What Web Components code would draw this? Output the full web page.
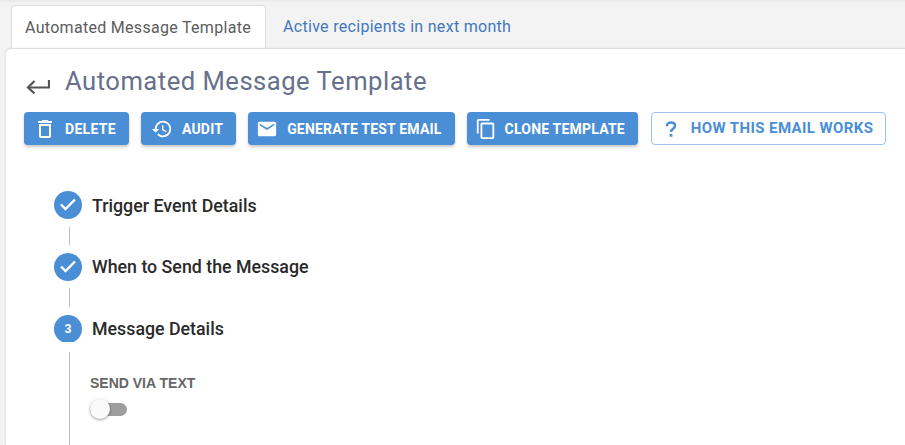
<!DOCTYPE html>
<html>
<head>
<meta charset="utf-8">
<style>
  html, body { margin: 0; padding: 0; height: 100%; overflow: hidden; background: #f3f3f3; }
  body { font-family: Roboto, sans-serif; }
</style>
</head>
<body>
<template id="tabs-tpl">
  <style>
    :host { display: flex; height: 48px; padding: 5px 0 0 11px; box-sizing: border-box; background: linear-gradient(#e9e9e9, #f3f3f3 3px); position: relative; z-index: 0; }
    a { display: block; font-size: 16px; letter-spacing: .3px; line-height: 44px; padding: 0 14px; color: #3f78c0; }
    a.active { background: #fff; color: #5c5c5c; border: 1px solid #dedede; border-bottom: 0; border-radius: 4px 4px 0 0; height: 44px; line-height: 43px; padding: 0 14px 0 13px; margin-right: 3px; box-sizing: border-box; }
  </style>
  <a class="active">Automated Message Template</a>
  <a>Active recipients in next month</a>
</template>

<template id="card-tpl">
  <style>
    :host { display: block; margin-left: 5px; height: 397px; background: #fff; border-top: 1px solid #dedede; border-left: 1px solid #e8e8e8; border-radius: 6px 0 0 0; box-sizing: border-box; position: relative; box-shadow: 0 0 2px rgba(0,0,0,.08); padding: 0 0 0 18px; overflow: hidden; }
    header { display: flex; align-items: center; height: 63px; }
    header svg { width: 24px; height: 24px; margin: 8px 15px 0 2px; flex: none; }
    h1 { margin: 0; padding-top: 2px; font-size: 25.6px; font-weight: 400; letter-spacing: .5px; line-height: 67px; color: #67708c; }
    .actions { display: flex; }
    .steps { padding: 46px 0 0 30px; }
  </style>
  <header>
    <svg viewBox="0 0 24 24" fill="none" stroke="#555" stroke-width="2.200"><path d="M23 7v7.500H2.500"/><path d="M8.500 8 2 14.500l6.500 6"/></svg>
    <h1><slot name="title"></slot></h1>
  </header>
  <div class="actions"><slot name="actions"></slot></div>
  <div class="steps"><slot></slot></div>
</template>

<template id="btn-tpl">
  <style>
    :host { display: block; margin-right: 12px; }
    :host([outline]) { margin-left: 1px; }
    button { display: flex; align-items: center; height: 33px; padding: 0 13px 0 var(--pad, 10px); border: 0; border-radius: 4px; background: #4a8ed6; color: #fff; font: 700 14px Roboto, sans-serif; letter-spacing: var(--ls, .2px); box-shadow: 0 2px 3px rgba(0,0,0,.22); white-space: nowrap; }
    span { display: flex; width: 22px; margin-right: var(--gap, 9px); justify-content: center; }
    :host([outline]) button { background: #fff; color: #4a8ed6; border: 1px solid #9cc2ea; box-shadow: none; font-size: 15px; letter-spacing: .4px; padding: 0 12px 2px 8px; }
    :host([outline]) ::slotted(svg) { margin-top: 2px; }
    ::slotted(svg) { display: block; width: 22px; height: 22px; flex: none; }
  </style>
  <button><span><slot name="icon"></slot></span><slot></slot></button>
</template>

<template id="step-tpl">
  <style>
    :host { display: block; }
    .row { display: flex; align-items: center; height: 28px; }
    .dot { width: 28px; height: 28px; border-radius: 50%; background: #4a8ed6; color: #fff; display: flex; align-items: center; justify-content: center; font: 700 12.500px "Liberation Sans", sans-serif; margin-right: 10px; flex: none; }
    :host(:not([done])) .dot { clip-path: inset(0 0 1px 0); }
    ::slotted(svg) { display: block; width: 28px; height: 28px; }
    .label { font-size: 17.800px; font-weight: 500; color: #2a2a2a; }
    .body { margin: 8px 0 8px 15px; border-left: 1px solid #bdbdbd; height: 18px; }
    :host([short]) .body { height: 19px; margin-top: 7px; }
    :host([short]) .label, :host(:not([done])) .label { margin-top: -2px; }
    :host(:not([done])) .body { margin: 9px 0 0 15px; padding: 23px 0 0 20px; height: 100px; }
  </style>
  <div class="row"><div class="dot"><slot name="mark"></slot></div><div class="label"><slot name="label"></slot></div></div>
  <div class="body"><slot></slot></div>
</template>

<template id="toggle-tpl">
  <style>
    :host { display: block; }
    .cap { font: 700 14px/16px "Liberation Sans", sans-serif; color: #666; }
    .track { position: relative; width: 37px; height: 13px; margin-top: 12px; border-radius: 7px; background: #9e9e9e; }
    .knob { position: absolute; left: 0; top: -4px; width: 20px; height: 20px; border-radius: 50%; background: #fafafa; box-shadow: 0 1px 3px rgba(0,0,0,.4); }
  </style>
  <div class="cap"><slot></slot></div>
  <div class="track"><div class="knob"></div></div>
</template>

<app-tabs></app-tabs>
<message-card>
  <span slot="title">Automated Message Template</span>
  <action-button slot="actions" style="--ls:.3px">
    <svg slot="icon" viewBox="1 1 22 22" fill="#fff"><path d="M6 19c0 1.100.9 2 2 2h8c1.100 0 2-.9 2-2V7H6v12zM8 9h8v10H8V9zm7.500-5-1-1h-5l-1 1H5v2h14V4h-3.500z"/></svg>
    DELETE
  </action-button>
  <action-button slot="actions">
    <svg slot="icon" viewBox="0 0 24 24" fill="#fff"><path d="M13 3a9 9 0 0 0-9 9H1l3.900 3.900.07.14L9 12H6a7 7 0 1 1 2.050 4.950l-1.420 1.420A9 9 0 1 0 13 3zm-1 5v5l4.280 2.540.72-1.210-3.500-2.080V8H12z"/></svg>
    AUDIT
  </action-button>
  <action-button slot="actions" style="--pad:8px">
    <svg slot="icon" viewBox="0 0 24 24" fill="#fff"><path d="M20 4H4c-1.100 0-2 .9-2 2v12c0 1.100.9 2 2 2h16c1.100 0 2-.9 2-2V6c0-1.100-.9-2-2-2zm0 4-8 5-8-5V6l8 5 8-5v2z"/></svg>
    GENERATE TEST EMAIL
  </action-button>
  <action-button slot="actions" style="--pad:8px;--gap:8px">
    <svg slot="icon" viewBox="0 0 24 24" fill="#fff"><path d="M16 1H4c-1.100 0-2 .9-2 2v14h2V3h12V1zm3 4H8c-1.100 0-2 .9-2 2v14c0 1.100.9 2 2 2h11c1.100 0 2-.9 2-2V7c0-1.100-.9-2-2-2zm0 16H8V7h11v14z"/></svg>
    CLONE TEMPLATE
  </action-button>
  <action-button slot="actions" outline>
    <svg slot="icon" viewBox="0 0 22 22"><path d="M6.900 8.200C6.900 5.800 8.600 4.600 11 4.600s4 1.300 4 3.300c0 3-4 2.700-4 6.100" fill="none" stroke="#4a8ed6" stroke-width="2.500"/><rect x="9.600" y="15.900" width="2.800" height="2.800" fill="#4a8ed6"/></svg>
    HOW THIS EMAIL WORKS
  </action-button>

  <step-item done>
    <svg slot="mark" viewBox="0 0 28 28" fill="none" stroke="#fff" stroke-width="2.400"><path d="M7 13.500l4.500 4.500L21 8.500"/></svg>
    <span slot="label">Trigger Event Details</span>
  </step-item>
  <step-item done short>
    <svg slot="mark" viewBox="0 0 28 28" fill="none" stroke="#fff" stroke-width="2.400"><path d="M7 13.500l4.500 4.500L21 8.500"/></svg>
    <span slot="label">When to Send the Message</span>
  </step-item>
  <step-item>
    <span slot="mark">3</span>
    <span slot="label">Message Details</span>
    <toggle-field>SEND VIA TEXT</toggle-field>
  </step-item>
</message-card>

<script>
  class Base extends HTMLElement {
    constructor () {
      super()
      const tpl = document.getElementById(this.constructor.tpl)
      this.attachShadow({ mode: 'open' })
      this.shadowRoot.appendChild(tpl.content.cloneNode(true))
    }
  }
  class AppTabs extends Base { static tpl = 'tabs-tpl' }
  class MessageCard extends Base { static tpl = 'card-tpl' }
  class ActionButton extends Base { static tpl = 'btn-tpl' }
  class StepItem extends Base { static tpl = 'step-tpl' }
  class ToggleField extends Base { static tpl = 'toggle-tpl' }
  customElements.define('app-tabs', AppTabs)
  customElements.define('message-card', MessageCard)
  customElements.define('action-button', ActionButton)
  customElements.define('step-item', StepItem)
  customElements.define('toggle-field', ToggleField)
</script>
</body>
</html>
